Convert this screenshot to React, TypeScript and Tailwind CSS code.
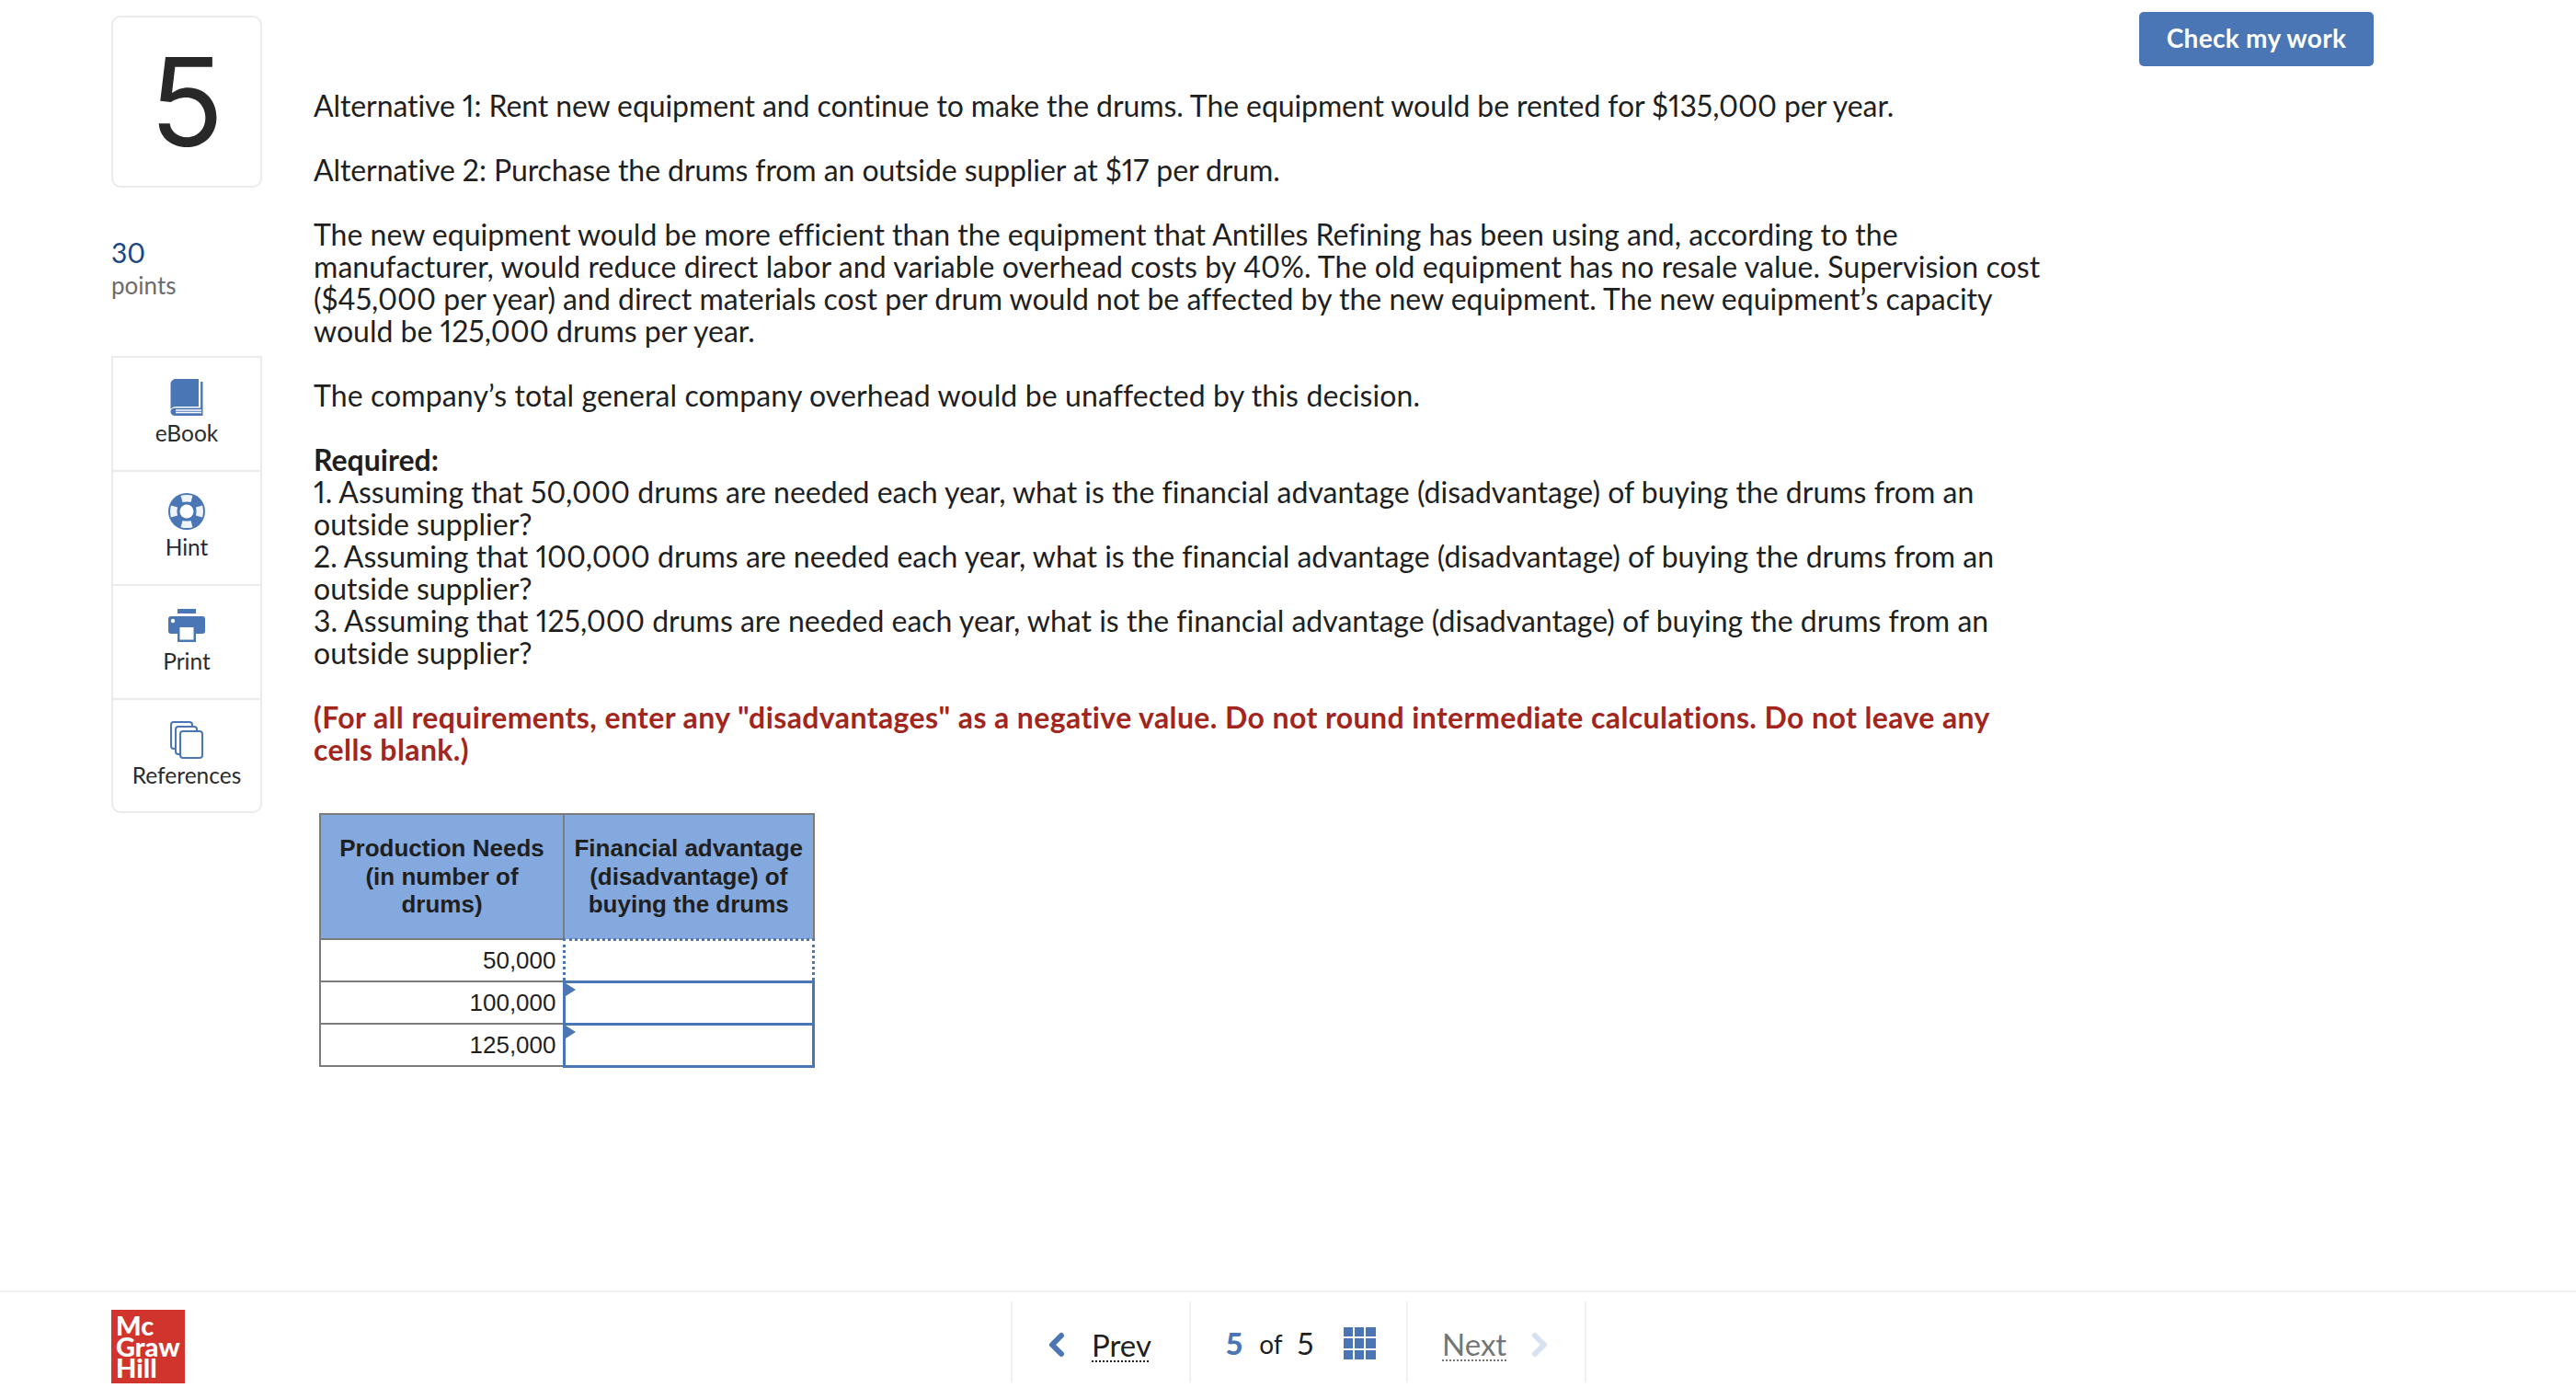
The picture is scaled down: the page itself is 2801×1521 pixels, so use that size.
import type { ReactNode } from "react";

const BLUE = "#4a76b5";

function BookIcon() {
  return (
    <svg width="36" height="41" viewBox="0 0 36 41" fill="none">
      <path d="M6 0h25v30H6.500C3.500 30 1 31.500 0.500 33V5.500C0.500 2.500 3 0 6 0z" fill={BLUE} />
      <path d="M33 3h2.500v37H6C2.500 40 0.500 38 0.500 35.500S2.500 31.500 6 31.500h27V3z" fill={BLUE} />
      <path d="M6 34h28M6 36.500h28" stroke="#fff" strokeWidth="1.400" />
      <path d="M32.500 0v31" stroke="#fff" strokeWidth="1.200" />
    </svg>
  );
}

function HintIcon() {
  return (
    <svg width="40" height="40" viewBox="0 0 40 40">
      <circle cx="20" cy="20" r="20" fill={BLUE} />
      <circle cx="20" cy="20" r="7.500" fill="#fff" />
      <g fill="#eef3f9">
        <path d="M13.500 2.800Q20 1 26.500 2.800L24.500 10Q20 8.800 15.500 10z" />
        <path d="M13.500 37.200Q20 39 26.500 37.200L24.500 30Q20 31.200 15.500 30z" />
        <path d="M2.800 13.500Q1 20 2.800 26.500L10 24.500Q8.800 20 10 15.500z" />
        <path d="M37.200 13.500Q39 20 37.200 26.500L30 24.500Q31.200 20 30 15.500z" />
      </g>
    </svg>
  );
}

function PrintIcon() {
  return (
    <svg width="40" height="36" viewBox="0 0 40 36">
      <rect x="10" y="0" width="20" height="5" fill={BLUE} />
      <path d="M3 8h34a3 3 0 0 1 3 3v13a3 3 0 0 1-3 3H30v9H10v-9H3a3 3 0 0 1-3-3V11a3 3 0 0 1 3-3z" fill={BLUE} />
      <circle cx="5" cy="13" r="2.200" fill="#fff" />
      <rect x="12.500" y="20" width="15" height="13.500" fill="#fff" />
    </svg>
  );
}

function RefsIcon() {
  return (
    <svg width="36" height="41" viewBox="0 0 36 41" fill="#fff" stroke={BLUE} strokeWidth="2">
      <rect x="1" y="1" width="23" height="29" rx="3" />
      <rect x="6" y="6" width="23" height="30" rx="3" />
      <rect x="11" y="11" width="24" height="29" rx="3" />
    </svg>
  );
}

function GridIcon() {
  const cells = [0, 1, 2, 3, 4, 5, 6, 7, 8];
  return (
    <div className="grid grid-cols-3 gap-[2px] w-[35px] h-[35px]">
      {cells.map((c) => (
        <div key={c} className="bg-[#4a76b5]" />
      ))}
    </div>
  );
}

function Tool({ icon, label, last }: { icon: ReactNode; label: string; last?: boolean }) {
  return (
    <div
      className={`flex flex-col items-center pt-[22px] ${
        last ? "h-[121px]" : "h-[124px] border-b-2 border-[#ebebeb]"
      }`}
    >
      <div className="h-[42px] flex items-center justify-center">{icon}</div>
      <div className="mt-[4px] text-[24.500px] leading-[28px] text-[#2b2b2b]">{label}</div>
    </div>
  );
}

function AnswerCell({ dotted }: { dotted?: boolean }) {
  if (dotted) {
    return <td className="p-0 h-[46px] border-[3px] border-dotted border-[#4a76b5]" />;
  }
  return (
    <td className="p-0 h-[46px] relative border-[3px] border-[#4a76b5]">
      <span className="absolute left-0 top-0 w-0 h-0 border-y-[7px] border-y-transparent border-l-[11px] border-l-[#4a76b5]" />
    </td>
  );
}

export default function App() {
  return (
    <div className="h-[1521px] flex flex-col bg-white text-[#1f1f1f] font-['Lato',sans-serif] proportional-nums [font-variant-ligatures:none]">
      <div className="flex-1 flex items-start">
        {/* Left rail */}
        <div className="ml-[121px] w-[164px] shrink-0 pt-[17px]">
          <div className="h-[187px] border-2 border-[#ebebeb] rounded-[10px] flex items-center justify-center font-['Inter',sans-serif] text-[133px] leading-none text-[#282828]">
            5
          </div>
          <div className="mt-[53px] text-[30px] leading-[34px] text-[#1d4586]">30</div>
          <div className="text-[26px] leading-[39px] text-[#6b6b6b]">points</div>
          <div className="mt-[57px] border-2 border-[#ebebeb] rounded-b-[10px]">
            <Tool icon={<BookIcon />} label="eBook" />
            <Tool icon={<HintIcon />} label="Hint" />
            <Tool icon={<PrintIcon />} label="Print" />
            <Tool icon={<RefsIcon />} label="References" last />
          </div>
        </div>

        {/* Question */}
        <div className="ml-[56px] w-[1985px] shrink-0 pt-[97px] text-[32px] leading-[35px] whitespace-nowrap">
          <p className="tracking-[-0.09px]">Alternative 1: Rent new equipment and continue to make the drums. The equipment would be rented for $135,000 per year.</p>
          <p className="mt-[35px] tracking-[-0.09px]">Alternative 2: Purchase the drums from an outside supplier at $17 per drum.</p>
          <p className="mt-[35px]">
            The new equipment would be more efficient than the equipment that Antilles Refining has been using and, according to the
            <br />
            <span className="tracking-[0.07px]">manufacturer, would reduce direct labor and variable overhead costs by 40%. The old equipment has no resale value. Supervision cost</span>
            <br />
            ($45,000 per year) and direct materials cost per drum would not be affected by the new equipment. The new equipment’s capacity
            <br />
            would be 125,000 drums per year.
          </p>
          <p className="mt-[35px] tracking-[0.11px]">The company’s total general company overhead would be unaffected by this decision.</p>
          <p className="mt-[35px]">
            <b className="font-bold">Required:</b>
            <br />
            1. Assuming that 50,000 drums are needed each year, what is the financial advantage (disadvantage) of buying the drums from an
            <br />
            outside supplier?
            <br />
            2. Assuming that 100,000 drums are needed each year, what is the financial advantage (disadvantage) of buying the drums from an
            <br />
            outside supplier?
            <br />
            3. Assuming that 125,000 drums are needed each year, what is the financial advantage (disadvantage) of buying the drums from an
            <br />
            outside supplier?
          </p>
          <p className="mt-[35px] font-bold text-[#a2261e] tracking-[0.4px]">
            (For all requirements, enter any "disadvantages" as a negative value. Do not round intermediate calculations. Do not leave any
            <br />
            cells blank.)
          </p>

          <table className="mt-[52px] ml-[6px] border-collapse table-fixed w-[539px] font-['Liberation_Sans',sans-serif] text-[26px] leading-[30.500px] text-[#1f1f1f]">
            <thead>
              <tr className="bg-[#83a9de] font-bold text-center">
                <th className="w-[265px] h-[136px] border-2 border-[#7b7b7b] font-bold">
                  Production Needs
                  <br />
                  (in number of
                  <br />
                  drums)
                </th>
                <th className="border-2 border-[#7b7b7b] font-bold">
                  Financial advantage
                  <br />
                  (disadvantage) of
                  <br />
                  buying the drums
                </th>
              </tr>
            </thead>
            <tbody>
              <tr>
                <td className="h-[46px] p-0 pr-[7px] text-right border-2 border-[#7b7b7b]">50,000</td>
                <AnswerCell dotted />
              </tr>
              <tr>
                <td className="h-[46px] p-0 pr-[7px] text-right border-2 border-[#7b7b7b]">100,000</td>
                <AnswerCell />
              </tr>
              <tr>
                <td className="h-[46px] p-0 pr-[7px] text-right border-2 border-[#7b7b7b]">125,000</td>
                <AnswerCell />
              </tr>
            </tbody>
          </table>
        </div>

        <button className="mt-[13px] w-[255px] h-[59px] pb-[3px] shrink-0 bg-[#4a76b5] rounded-[5px] text-white font-bold text-[28px] tracking-[0.3px]">
          Check my work
        </button>
      </div>

      {/* Footer */}
      <div className="h-[118px] shrink-0 border-t-2 border-[#f1f1f1] flex items-start">
        <div className="ml-[121px] mt-[19px] w-[80px] h-[80px] bg-[#d0342c] text-white font-black text-[29px] leading-[23px] pl-[5px] pt-[5px] flex flex-col">
          <span>Mc</span>
          <span>Graw</span>
          <span>Hill</span>
        </div>
        <div className="ml-[898px] mt-[10px] h-[88px] flex border-l-2 border-[#f1f1f1] text-[33px]">
          <div className="w-[194px] flex items-center border-r-2 border-[#f1f1f1] pl-[38px]">
            <svg className="mt-[5px]" width="20" height="28" viewBox="0 0 20 28" fill="none" stroke={BLUE} strokeWidth="6" strokeLinecap="round" strokeLinejoin="round">
              <path d="M15 4 5 14l10 10" />
            </svg>
            <span className="ml-[28px] mt-[7px] underline decoration-dotted decoration-2 underline-offset-[5px]">Prev</span>
          </div>
          <div className="w-[236px] flex items-center border-r-2 border-[#f1f1f1] pl-[38px] pt-[3px]">
            <span className="font-black text-[#4a76b5]">5</span>
            <span className="ml-[18px] text-[28px]">of</span>
            <span className="ml-[16px]">5</span>
            <span className="ml-[32px]">
              <GridIcon />
            </span>
          </div>
          <div className="w-[194px] flex items-center border-r-2 border-[#f1f1f1] pl-[37px] text-[#757575]">
            <span className="mt-[5px] underline decoration-dotted decoration-2 underline-offset-[5px]">Next</span>
            <svg className="ml-[26px] mt-[5px]" width="20" height="28" viewBox="0 0 20 28" fill="none" stroke="#d7e2f0" strokeWidth="6" strokeLinecap="round" strokeLinejoin="round">
              <path d="M5 4l10 10L5 24" />
            </svg>
          </div>
        </div>
      </div>
    </div>
  );
}
